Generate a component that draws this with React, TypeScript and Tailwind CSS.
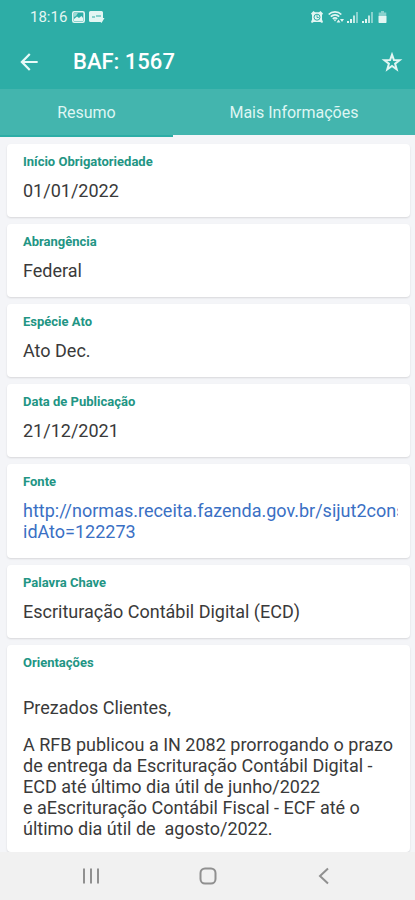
import React, { useState } from 'react';
import { MdArrowBack } from 'react-icons/md';

interface Field {
  label: string;
  value: string;
}

const fields: Field[] = [
  { label: 'Início Obrigatoriedade', value: '01/01/2022' },
  { label: 'Abrangência', value: 'Federal' },
  { label: 'Espécie Ato', value: 'Ato Dec.' },
  { label: 'Data de Publicação', value: '21/12/2021' },
];

const tabs = [
  { id: 'resumo', label: 'Resumo', width: 'w-5/12' },
  { id: 'mais', label: 'Mais Informações', width: 'w-7/12' },
];

const SignalIcon: React.FC = () => (
  <svg className="h-3 w-3" viewBox="0 0 12 12" fill="currentColor" aria-hidden="true">
    <path d="M0 10h2v2H0zM3 8h2v4H3z" />
    <path d="M6 4.500h2V12H6z" opacity="0.8" />
    <path d="M9 1h2v11H9z" opacity="0.5" />
  </svg>
);

const StatusBar: React.FC = () => (
  <div className="flex h-[34px] items-center justify-between pr-7 pl-[30px] text-[#e3f6f3]">
    <div className="flex items-center gap-1">
      <span className="text-[15px] leading-5">18:16</span>
      <svg className="ml-px h-3 w-[13px]" viewBox="0 0 13 12" aria-hidden="true">
        <rect x="0.8" y="0.8" width="11.4" height="10.4" rx="1.5" fill="none" stroke="currentColor" strokeWidth="1.6" />
        <path d="M2 10V8l3-2.500 2 1.500 2.500-2L11 7v3z" fill="currentColor" />
        <path d="M2 2h4L4 5 2 6z" fill="currentColor" opacity="0.6" />
      </svg>
      <svg className="h-3 w-4" viewBox="0 0 16 12" aria-hidden="true">
        <path d="M1.500 0h11A1.500 1.500 0 0 1 14 1.500V7h1.500L12.500 12l-1-1h-10A1.500 1.500 0 0 1 0 9.500v-8A1.500 1.500 0 0 1 1.500 0z" fill="currentColor" />
        <path d="M3 6h3M7 5h5" stroke="#2dada6" strokeWidth="1.2" />
      </svg>
    </div>
    <div className="flex items-center gap-[3px]">
      <svg className="h-3 w-3" viewBox="0 0 12 12" aria-hidden="true">
        <path d="M0 2.500L2.500 0l1.500 1.200h4L9.500 0 12 2.500l-1 1.500v4.500L12 11l-1 1-1.700-1H2.700L1 12l-1-1 1-2.500V4z" fill="currentColor" />
        <circle cx="6" cy="6.200" r="3" fill="none" stroke="#2dada6" strokeWidth="1" />
        <path d="M6 4.200v2.300h1.800" fill="none" stroke="#2dada6" strokeWidth="0.9" />
      </svg>
      <svg className="ml-[2px] h-3 w-4" viewBox="0 0 16 12" fill="none" stroke="currentColor" aria-hidden="true">
        <path d="M0.700 3.500C4 0 10 0 13.300 3.500M2.800 5.700c2.500-2.500 6-2.500 8.400 0M4.800 7.900c1.400-1.300 3-1.300 4.400 0" strokeWidth="1.700" />
        <path d="M5.500 8.500h3L7 10.500z" fill="currentColor" stroke="none" />
        <path d="M8.500 11.500l2-3 2 3zM12 8h4l-2 3z" fill="currentColor" stroke="none" />
      </svg>
      <SignalIcon />
      <SignalIcon />
      <svg className="ml-px h-3 w-[9px]" viewBox="0 0 9 12" fill="currentColor" aria-hidden="true">
        <path d="M3 0h3v1.500h2.300v3.500H0.700V1.500H3z" opacity="0.5" />
        <path d="M0.500 5h8v6.300a.7.7 0 0 1-.7.7H1.200a.7.7 0 0 1-.7-.7z" />
      </svg>
    </div>
  </div>
);

const InfoCard: React.FC<{ label: string; className?: string; children: React.ReactNode }> = ({
  label,
  className = 'pb-4',
  children,
}) => (
  <section className={`rounded-[4px] bg-white pt-[10px] pr-3 pl-4 shadow-[0_1px_2px_rgba(0,0,0,0.12)] ${className}`}>
    <h2 className="mb-[10px] text-[13px] leading-4 font-bold text-[#229584]">{label}</h2>
    <div className="flow-root text-[18px] leading-[21px] text-[#3a3a3a]">{children}</div>
  </section>
);

const App: React.FC = () => {
  const [activeTab, setActiveTab] = useState('mais');

  return (
    <div className="flex min-h-screen flex-col bg-[#f4f5f8] font-['Roboto',sans-serif]">
      <header className="bg-[#2dada6] text-white">
        <StatusBar />
        <div className="flex h-[55px] items-center px-4">
          <button type="button" aria-label="Voltar" className="text-[#e8faf8]">
            <MdArrowBack className="h-[26px] w-[26px]" />
          </button>
          <h1 className="ml-[31px] flex-1 text-[22px] leading-7 font-medium">BAF: 1567</h1>
          <button type="button" aria-label="Favoritar" className="-mr-1 text-[#e3f6f3]">
            <svg className="h-[22px] w-[22px]" viewBox="0 0 24 24" fill="none" stroke="currentColor" strokeWidth="2.2" aria-hidden="true">
              <path d="M12 4l2.100 5.900 6.200.200-4.900 3.800 1.700 6-5.100-3.500-5.100 3.500 1.700-6-4.900-3.800 6.200-.200z" />
            </svg>
          </button>
        </div>
        <div role="tablist" className="flex h-12 bg-[#43b5ae]">
          {tabs.map((tab) => (
            <button
              key={tab.id}
              type="button"
              role="tab"
              aria-selected={activeTab === tab.id}
              onClick={() => setActiveTab(tab.id)}
              className={`${tab.width} border-b-2 pt-[2px] text-base leading-5 text-[#def6f3] ${
                activeTab === tab.id ? 'border-[#f4f5f8]' : 'border-[#2dada6]'
              }`}
            >
              {tab.label}
            </button>
          ))}
        </div>
      </header>

      <main className="flex flex-1 flex-col gap-[7px] pt-[7px] pr-[5px] pl-[7px]">
        {fields.map((field) => (
          <InfoCard key={field.label} label={field.label}>
            {field.value}
          </InfoCard>
        ))}
        <InfoCard label="Fonte">
          <a
            href="http://normas.receita.fazenda.gov.br/sijut2consulta/link.action?idAto=122273"
            className="block overflow-hidden text-[#3a70c4]"
          >
            <span className="block whitespace-nowrap">http://normas.receita.fazenda.gov.br/sijut2cons</span>
            idAto=122273
          </a>
        </InfoCard>
        <InfoCard label="Palavra Chave">Escrituração Contábil Digital (ECD)</InfoCard>
        <InfoCard label="Orientações" className="pb-[13px]">
          <p className="my-4">Prezados Clientes,</p>
          <p>
            A RFB publicou a IN 2082 prorrogando o prazo de entrega da Escrituração Contábil Digital - ECD até último
            dia útil de junho/2022
            <br />e aEscrituração Contábil Fiscal - ECF até o último dia útil de&nbsp; agosto/2022.
          </p>
        </InfoCard>
      </main>

      <nav className="flex h-12 items-center justify-around bg-[#f1f1f1] px-8 text-[#909090]">
        <button type="button" aria-label="Recentes">
          <svg className="h-5 w-5" viewBox="0 0 20 20" stroke="currentColor" strokeWidth="2" aria-hidden="true">
            <path d="M3 2.500v15M10 2.500v15M17 2.500v15" />
          </svg>
        </button>
        <button type="button" aria-label="Início">
          <svg className="h-5 w-5" viewBox="0 0 20 20" fill="none" stroke="currentColor" strokeWidth="2" aria-hidden="true">
            <rect x="2.500" y="2.500" width="15" height="15" rx="4.500" />
          </svg>
        </button>
        <button type="button" aria-label="Voltar">
          <svg className="h-5 w-5" viewBox="0 0 20 20" fill="none" stroke="currentColor" strokeWidth="2" aria-hidden="true">
            <path d="M13 2.500L5 10l8 7.500" />
          </svg>
        </button>
      </nav>
    </div>
  );
};

export default App;
